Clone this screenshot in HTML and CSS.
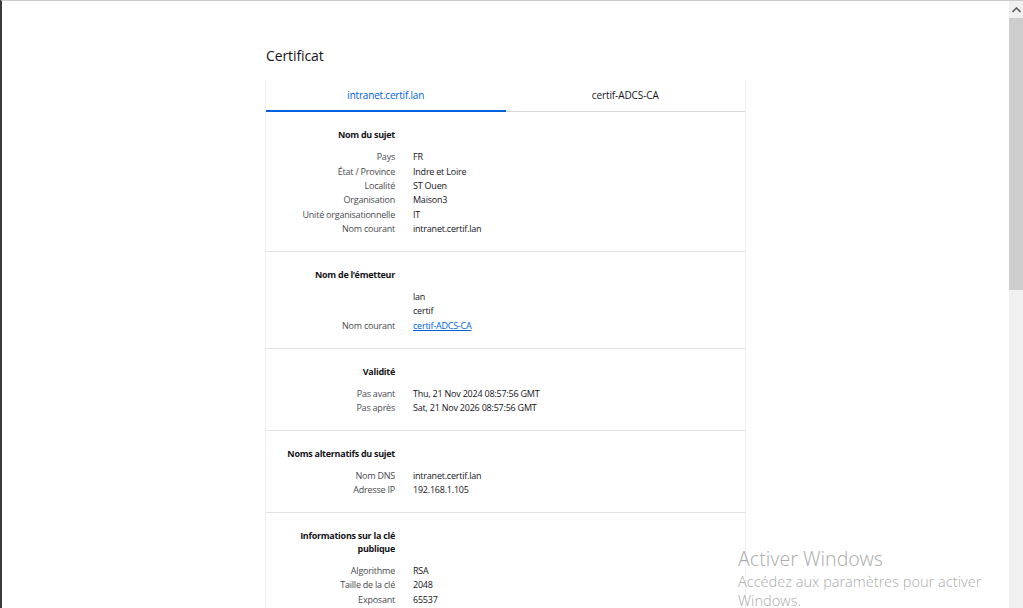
FILE: index.html
```html
<!DOCTYPE html>
<html lang="fr">
<head>
<meta charset="utf-8">
<title>Certificat</title>
<link rel="stylesheet" href="styles.css">
</head>
<body>
<div class="window">
  <div class="viewport">
    <main class="page">
      <h1 class="title">Certificat</h1>
      <div class="card">
        <div class="tabs">
          <div class="tab active">intranet.certif.lan</div>
          <div class="tab">certif-ADCS-CA</div>
        </div>

        <section class="group">
          <div class="row head"><div class="label">Nom du sujet</div><div class="value"></div></div>
          <div class="row"><div class="label">Pays</div><div class="value">FR</div></div>
          <div class="row"><div class="label">État / Province</div><div class="value">Indre et Loire</div></div>
          <div class="row"><div class="label">Localité</div><div class="value">ST Ouen</div></div>
          <div class="row"><div class="label">Organisation</div><div class="value">Maison3</div></div>
          <div class="row"><div class="label">Unité organisationnelle</div><div class="value">IT</div></div>
          <div class="row"><div class="label">Nom courant</div><div class="value">intranet.certif.lan</div></div>
        </section>

        <section class="group">
          <div class="row head"><div class="label">Nom de l’émetteur</div><div class="value"></div></div>
          <div class="row"><div class="label"></div><div class="value">lan</div></div>
          <div class="row"><div class="label"></div><div class="value">certif</div></div>
          <div class="row"><div class="label">Nom courant</div><div class="value"><a class="link" href="#">certif-ADCS-CA</a></div></div>
        </section>

        <section class="group">
          <div class="row head"><div class="label">Validité</div><div class="value"></div></div>
          <div class="row"><div class="label">Pas avant</div><div class="value">Thu, 21 Nov 2024 08:57:56 GMT</div></div>
          <div class="row"><div class="label">Pas après</div><div class="value">Sat, 21 Nov 2026 08:57:56 GMT</div></div>
        </section>

        <section class="group">
          <div class="row head"><div class="label">Noms alternatifs du sujet</div><div class="value"></div></div>
          <div class="row"><div class="label">Nom DNS</div><div class="value">intranet.certif.lan</div></div>
          <div class="row"><div class="label">Adresse IP</div><div class="value">192.168.1.105</div></div>
        </section>

        <section class="group">
          <div class="row head"><div class="label">Informations sur la clé<br>publique</div><div class="value"></div></div>
          <div class="row"><div class="label">Algorithme</div><div class="value">RSA</div></div>
          <div class="row"><div class="label">Taille de la clé</div><div class="value">2048</div></div>
          <div class="row"><div class="label">Exposant</div><div class="value">65537</div></div>
        </section>
      </div>
    </main>
    <div class="watermark">
      <div class="wm-title">Activer Windows</div>
      <div class="wm-text">Accédez aux paramètres pour activer<br>Windows.</div>
    </div>
  </div>
  <div class="scrollbar">
    <div class="sb-arrow"><svg width="9" height="6" viewBox="0 0 9 6"><path d="M0.5 5 L4.5 1 L8.5 5" fill="none" stroke="#606060" stroke-width="1.6"/></svg></div>
    <div class="sb-thumb"></div>
    <div class="sb-track"></div>
  </div>
</div>
</body>
</html>
```

FILE: styles.css
```css
html, body {
  margin: 0;
  padding: 0;
  height: 100%;
  overflow: hidden;
  background: #fff;
}
body {
  font-family: "Open Sans", "Noto Sans", sans-serif;
  color: #15141a;
}
.window {
  display: flex;
  height: 608px;
}
.viewport {
  position: relative;
  flex: 1;
  border-left: 2px solid #3a3a3a;
  border-top: 1px solid #c9c9c9;
  overflow: hidden;
}
.page {
  width: 481px;
  margin: 0 auto;
  padding-top: 45px;
}
.title {
  margin: 0 0 0 1px;
  font-size: 14px;
  font-weight: 400;
  line-height: 20px;
  color: #15141a;
  letter-spacing: -0.1px;
}
.card {
  margin-top: 14px;
  border-left: 1px solid #f0f0f4;
  border-right: 1px solid #f0f0f4;
}
.tabs {
  display: flex;
  border-bottom: 1px solid #d7d7db;
}
.tab {
  flex: 1;
  text-align: center;
  font-size: 10px;
  height: 30px;
  line-height: 31px;
  color: #15141a;
  letter-spacing: -0.1px;
}
.tab.active {
  color: #0061e0;
  border-bottom: 2px solid #0061e0;
  margin-bottom: -1px;
  letter-spacing: -0.2px;
}
.group {
  padding: 17px 0 14.4px;
  border-bottom: 1px solid #e0e0e6;
}
.row {
  display: grid;
  grid-template-columns: 129px 1fr;
  column-gap: 18px;
  font-size: 9px;
  line-height: 14.4px;
  letter-spacing: -0.22px;
}
.row .label {
  text-align: right;
  color: #4a4a4f;
}
.row .value {
  color: #15141a;
}
.row.head {
  margin-bottom: 8.6px;
}
.row.head .label {
  font-weight: 700;
  color: #15141a;
  line-height: 12.5px;
  letter-spacing: -0.28px;
}
.link {
  color: #0061e0;
  text-decoration: underline;
}
.watermark {
  position: absolute;
  left: 736px;
  top: 545px;
  color: rgba(120, 120, 120, 0.6);
  font-family: "Noto Sans", "Open Sans", sans-serif;
  font-weight: 300;
}
.wm-title {
  font-size: 19.5px;
  line-height: 26px;
}
.wm-text {
  font-size: 14.5px;
  line-height: 19px;
}
.scrollbar {
  width: 14px;
  display: flex;
  flex-direction: column;
  background: #f0f0f0;
  border-top: 1px solid #c9c9c9;
}
.sb-arrow {
  height: 17px;
  display: flex;
  align-items: center;
  justify-content: center;
}
.sb-thumb {
  height: 272px;
  background: #cdcdcd;
}
.sb-track {
  flex: 1;
}
```
